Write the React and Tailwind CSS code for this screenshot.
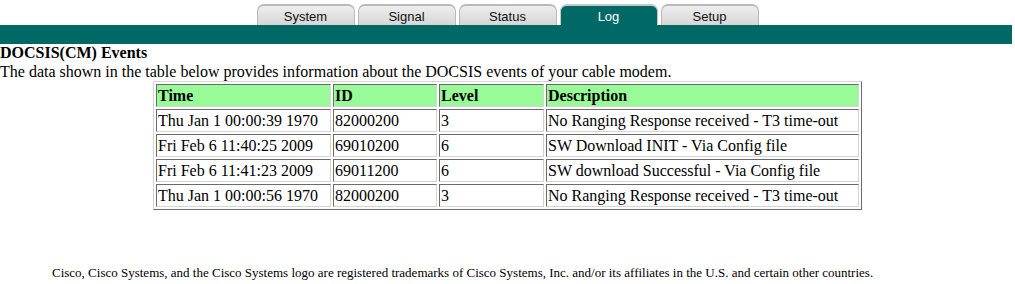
import React from 'react';

const tabs = ['System', 'Signal', 'Status', 'Log', 'Setup'];

const events = [
  { time: 'Thu Jan 1 00:00:39 1970', id: '82000200', level: '3', desc: 'No Ranging Response received - T3 time-out' },
  { time: 'Fri Feb 6 11:40:25 2009', id: '69010200', level: '6', desc: 'SW Download INIT - Via Config file' },
  { time: 'Fri Feb 6 11:41:23 2009', id: '69011200', level: '6', desc: 'SW download Successful - Via Config file' },
  { time: 'Thu Jan 1 00:00:56 1970', id: '82000200', level: '3', desc: 'No Ranging Response received - T3 time-out' },
];

const cell = 'border border-t-[#6b6b6b] border-l-[#6b6b6b] border-b-[#d4d4d4] border-r-[#d4d4d4] px-[1px] h-[23px] text-left align-middle leading-[19px] whitespace-nowrap';

export default function App() {
  return (
    <div className="w-[1015px] h-[284px] bg-white text-black font-['Liberation_Serif',serif] text-[16px]">
      {/* tabs */}
      <div className="flex justify-center gap-[3px] pt-[4px] h-[25px] font-['Liberation_Sans',sans-serif] text-[13px]">
        {tabs.map((t) => (
          <div
            key={t}
            className={
              t === 'Log'
                ? 'w-[98px] h-[21px] rounded-t-[7px] border-t-[2px] border-x border-[#c8c8c8] bg-[#006966] text-white flex items-center justify-center pt-[3px]'
                : 'w-[98px] h-[21px] rounded-t-[7px] border-t-[2px] border-x border-[#b9b9b9] bg-gradient-to-b from-[#eeeeee] to-[#d6d6d6] text-[#111] flex items-center justify-center pt-[3px]'
            }
          >
            {t}
          </div>
        ))}
      </div>
      <div className="h-[19px] w-[1012px] bg-[#006966]" />

      <div className="font-bold leading-[18px]">DOCSIS(CM) Events</div>
      <div className="leading-[19px]">
        The data shown in the table below provides information about the DOCSIS events of your cable modem.
      </div>

      <div className="flex justify-center">
        <table className="table-fixed w-[709px] border-separate border-spacing-[2px] border border-t-[#d4d4d4] border-l-[#d4d4d4] border-b-[#6b6b6b] border-r-[#6b6b6b]">
          <thead>
            <tr className="bg-[#98fb98] font-bold">
              <th className={`${cell} w-[175px]`}>Time</th>
              <th className={`${cell} w-[104px]`}>ID</th>
              <th className={`${cell} w-[105px]`}>Level</th>
              <th className={`${cell} w-[313px]`}>Description</th>
            </tr>
          </thead>
          <tbody>
            {events.map((e, i) => (
              <tr key={i}>
                <td className={cell}>{e.time}</td>
                <td className={cell}>{e.id}</td>
                <td className={cell}>{e.level}</td>
                <td className={cell}>{e.desc}</td>
              </tr>
            ))}
          </tbody>
        </table>
      </div>

      <div className="pl-[52px] mt-[55px] text-[13px] leading-[16px]">
        Cisco, Cisco Systems, and the Cisco Systems logo are registered trademarks of Cisco Systems, Inc. and/or its affiliates in the U.S. and certain other countries.
      </div>
    </div>
  );
}
